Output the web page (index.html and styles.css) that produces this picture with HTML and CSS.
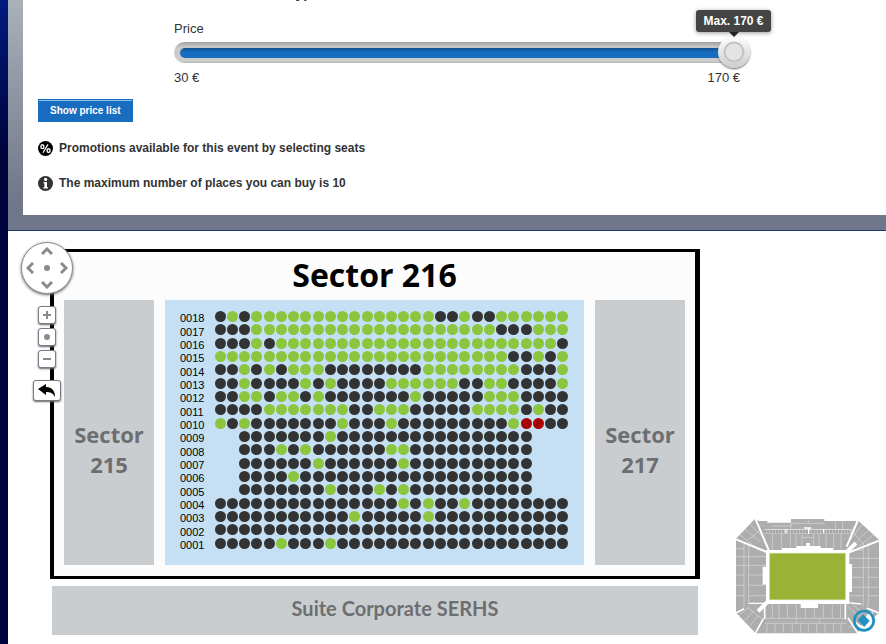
FILE: index.html
```html
<!DOCTYPE html>
<html lang="en">
<head>
  <meta charset="UTF-8" />
  <meta name="viewport" content="width=device-width, initial-scale=1.0"/>
  <title>Sector 216</title>
  <link rel="stylesheet" href="styles.css">
</head>
<body>

  <div class="page">
    <div class="frame">
      <div class="panel">
        <h3 class="cut-title">Type</h3>

        <div class="price">
          <label for="price">Price</label>
          <div class="slider">
            <input type="range" id="price" min="30" max="170" value="170">
            <output class="tip" for="price">Max. 170 €</output>
          </div>
          <div class="limits"><span>30 €</span><span>170 €</span></div>
        </div>

        <button class="btn" type="button">Show price list</button>

        <p class="note">
          <svg class="icon" viewBox="0 0 15 15" aria-hidden="true">
            <circle cx="7.5" cy="7.5" r="7.5" fill="#000"/>
            <g fill="none" stroke="#fff">
              <ellipse cx="4.4" cy="5.7" rx="1.5" ry="1.9" stroke-width="1.4"/>
              <ellipse cx="10.6" cy="9.6" rx="1.5" ry="1.9" stroke-width="1.4"/>
              <path d="M10 3.4 5 11.8" stroke-width="1.2"/>
            </g>
          </svg>
          Promotions available for this event by selecting seats
        </p>
        <p class="note">
          <svg class="icon" viewBox="0 0 15 15" aria-hidden="true">
            <circle cx="7.5" cy="7.5" r="7.5" fill="#333"/>
            <circle cx="7.6" cy="3.4" r="1.6" fill="#fff"/>
            <path d="M5.6 6H9v5.2h1v1.4H5.4v-1.4h1V7.4h-.8z" fill="#fff"/>
          </svg>
          The maximum number of places you can buy is 10
        </p>
      </div>
    </div>

    <div class="map">
      <div class="plan">
        <div class="stand">
          <h1>Sector 216</h1>
          <div class="sectors">
            <a class="sector" href="#215">Sector<br>215</a>
            <div class="seats" id="seats"></div>
            <a class="sector" href="#217">Sector<br>217</a>
          </div>
        </div>
        <a class="suite" href="#suite">Suite Corporate SERHS</a>
      </div>

      <svg class="stadium" viewBox="45 42 432 350" role="img" aria-label="Stadium">
        <path fill="#adadad" d="M48 104 104 45l14 6h24v5h71V45h100v6h97l5-1 62 57v219l-67 62H107l-59-62z"/>
        <!-- seat block divisions -->
        <g fill="none" stroke="#d9d9d9" stroke-width="2">
          <path d="M213 56v18M265 46v13M213 58h100M157 66h56M346 52v22M368 52v22"/>
          <path d="M157 90v48M184 90v46M211 90v40M228 90v38M246 90v36M281 90v36M297 90v38M318 90v40M341 90v44M363 90v46M246 100h35"/>
          <path d="M72 118v190M86 122v178M48 134h24M48 158h90M48 184h90M48 213h24M86 213h44M48 244h24M86 244h44M48 275h24M86 275h54"/>
          <path d="M430 118v190M445 114v194M390 138h40M390 163h87M390 191h87M396 220h34M396 250h81M390 275h40M445 275h32M445 220h32"/>
          <path d="M60 92l56 46M75 77l46 36M92 62l34 36M86 108l34-30M426 62l-34 46M445 78l-40 40M460 92l-44 36M392 76l38 44"/>
          <path d="M157 302v40M177 302v40M202 302v40M229 302v40M256 302v40M283 312v30M310 302v40M337 302v40M362 302v40"/>
          <path d="M132 343h244M134 358h246M229 344v14M298 344v14M141 360v28M165 360v28M190 360v28M217 360v28M242 360v28M265 360v28M290 360v28M315 360v28M340 360v28M363 360v28"/>
          <path d="M58 334l30-26M74 350l26-28M90 366l24-30M84 312l40 30M382 306l42 38M396 300l34 28M386 372l40-40"/>
        </g>
        <path d="M132 76h262v12H132z" fill="#fff"/>
        <path d="M132 82h262" stroke="#a5a5a5" stroke-width="10" stroke-dasharray="8 1"/>
        <path d="M198 76v12M266 72v18M311 76v12M252 72h22" stroke="#fff" stroke-width="4"/>
        <g fill="none" stroke="#fff">
          <path d="M106 44 146 138M414 48 380 128M48 106 140 144M477 110 386 146" stroke-width="6"/>
          <path d="M48 327 72 314M477 327 440 312M106 388 130 344M414 388 384 342M134 344V304M376 300V346" stroke-width="5"/>
          <path d="M114 322 144 292M382 142 408 117" stroke-width="12"/>
          <path d="M86 298h54M384 296l40 4" stroke-width="4"/>
        </g>
        <path d="M138 138h48v-6h43v-6h29v-9h12v9h32v6h38v6h48v42h8v84h-8v36h-94v12h-52v-12H138v-58h-10v-54h10z" fill="#fff"/>
        <path d="M149 148h227v139H149z" fill="#9ab235" stroke="#c3d28b" stroke-width="2"/>
        <path d="M400 358 458 322v44l-28 22z" fill="#fff"/>
        <path d="M404 350l20-24 22-4-22 44z" fill="#adadad"/>
        <path d="M413 349l16-18 20 19-16 19z" fill="#2290c3"/>
        <circle cx="432" cy="350" r="29" fill="none" stroke="#2290c3" stroke-width="8"/>
      </svg>

      <div class="controls">
        <div class="pad">
          <button class="up" type="button" aria-label="Up"><svg viewBox="0 0 12 8"><path d="M1 7 6 2l5 5"/></svg></button>
          <button class="left" type="button" aria-label="Left"><svg viewBox="0 0 8 12"><path d="M7 1 2 6l5 5"/></svg></button>
          <button class="center" type="button" aria-label="Center"></button>
          <button class="right" type="button" aria-label="Right"><svg viewBox="0 0 8 12"><path d="M1 1l5 5-5 5"/></svg></button>
          <button class="down" type="button" aria-label="Down"><svg viewBox="0 0 12 8"><path d="M1 1l5 5 5-5"/></svg></button>
        </div>
        <div class="zoom">
          <button type="button" aria-label="Zoom in"><svg viewBox="0 0 8 8"><path d="M4 0v8M0 4h8"/></svg></button>
          <button type="button" aria-label="Reset zoom"><svg viewBox="0 0 8 8"><circle cx="4" cy="4" r="2"/></svg></button>
          <button type="button" aria-label="Zoom out"><svg viewBox="0 0 8 8"><path d="M0 4h8"/></svg></button>
        </div>
        <button class="back" type="button" aria-label="Back">
          <svg viewBox="0 0 18 13"><path d="M0 5 8 0v3c6 0 9 4 9 10-2-4-5-5-9-5v3z"/></svg>
        </button>
      </div>
    </div>
  </div>

  <script src="seats.js"></script>
</body>
</html>
```

FILE: styles.css
```css
* {
  box-sizing: border-box;
}
body {
  margin: 0;
  padding-left: 8px;
  min-height: 100vh;
  font-family: "Liberation Sans", Arial, sans-serif;
  font-size: 13px;
  color: #333;
  background: #00043c linear-gradient(#001a80, #00043c 150px) no-repeat;
}
button {
  padding: 0;
  border: none;
  cursor: pointer;
}
.page {
  background: #fff;
  min-height: 100vh;
}
.frame {
  padding: 0 0 15px 15px;
  background: linear-gradient(#a9b1b9, #70778a 200px);
  border-bottom: 1px solid #1b3a78;
}
.panel {
  background: #fff;
  padding: 0 15px 24px;
}
.cut-title {
  display: flex;
  align-items: flex-end;
  height: 2px;
  margin: 0 0 19px 250px;
  overflow: hidden;
  font-size: 14px;
  line-height: 18px;
}

/* price slider */
.price {
  max-width: 702px;
  padding-left: 136px;
  line-height: 16px;
}
.price label {
  display: block;
}
.slider {
  position: relative;
  height: 21px;
  margin: 5px 0 7px;
  border-radius: 11px;
  background: linear-gradient(#a0a0a0, #c8c8c8 5px, #cdcdcd 19px, #b4b4b4);
}
.slider::before {
  content: "";
  position: absolute;
  top: 6px;
  left: 6px;
  right: 6px;
  height: 10px;
  border-radius: 5px;
  background: linear-gradient(#11508c, #186dc0 4px);
}
.slider input {
  position: absolute;
  top: -6px;
  left: 0;
  width: calc(100% + 10px);
  height: 32px;
  margin: 0;
  appearance: none;
  background: none;
}
.slider input::-webkit-slider-thumb {
  appearance: none;
  width: 32px;
  height: 32px;
  border-radius: 50%;
  background:
    radial-gradient(circle, #e5e2e2 8px, #b9b9b9 9px, #ccc 10px, transparent 11px),
    linear-gradient(#fff, #ccc);
  box-shadow: 0 1px 2px #666;
}
.tip {
  position: absolute;
  right: -31px;
  bottom: 31px;
  width: 75px;
  border-radius: 3px;
  background: #444;
  box-shadow: 0 1px 4px #999;
  color: #fff;
  font-size: 12px;
  font-weight: bold;
  line-height: 22px;
  text-align: center;
}
.tip::after {
  content: "";
  position: absolute;
  top: 100%;
  left: 33px;
  border: 5px solid transparent;
  border-top-color: #222;
}
.limits {
  display: flex;
  justify-content: space-between;
}

.btn {
  display: block;
  height: 23px;
  margin: 13px 0 18px;
  padding: 0 11px;
  border: 1px solid #186dc0;
  box-shadow: inset 0 1px #8fc0ee;
  background: #186dc0;
  color: #fff;
  font-family: inherit;
  font-size: 10px;
  font-weight: bold;
}
.note {
  display: flex;
  align-items: center;
  gap: 6px;
  margin: 0 0 19px;
  font-size: 12px;
  font-weight: bold;
  line-height: 16px;
}
.note:last-child {
  margin-bottom: 0;
}
.icon {
  width: 15px;
  height: 15px;
}

/* seat map */
.map {
  position: relative;
  display: flex;
  align-items: flex-end;
  gap: 35px;
  padding: 18px 7px 8px 42px;
}
.plan {
  flex: 1;
}
.stand {
  border: 3px solid #000;
  border-width: 3px 5px 3px 4px;
  background: #fcfcfc;
}
.stand h1 {
  margin: 0;
  padding-bottom: 2px;
  color: #000;
  font-family: "Open Sans", "Noto Sans", sans-serif;
  font-size: 32px;
  font-weight: bold;
  line-height: 46px;
  text-align: center;
}
.sectors {
  display: grid;
  grid-template-columns: 90px 1fr 90px;
  gap: 11px;
  padding: 0 10px 11px;
}
.sector,
.suite {
  background: #cacdd0;
  color: #6d6e70;
  font-family: "Open Sans", "Noto Sans", sans-serif;
  font-weight: bold;
  text-align: center;
  text-decoration: none;
}
.sector {
  padding-top: 119px;
  font-size: 22px;
  line-height: 30px;
}
.suite {
  display: block;
  margin: 7px 2px 0;
  padding: 0 0 5px 40px;
  font-family: Lato, sans-serif;
  font-size: 20px;
  line-height: 44px;
}
.seats {
  display: flex;
  flex-direction: column;
  height: 265px;
  padding: 10px 15px 15px;
  background: #c5e0f5;
}
.row {
  flex: 1;
  display: grid;
  grid-template-columns: 34px repeat(29, 1fr);
  place-items: center;
}
.num {
  justify-self: start;
  align-self: end;
  color: #000;
  font-size: 11px;
  line-height: 10px;
}
.seat {
  width: 11px;
  height: 11px;
  border-radius: 50%;
  background: #333;
}
.free {
  background: #8cc63f;
}
.picked {
  background: #a80000;
}
.stadium {
  width: 144px;
}

/* map navigation */
.controls {
  position: absolute;
  top: 11px;
  left: 13px;
  display: flex;
  flex-direction: column;
  align-items: center;
  gap: 12px;
}
.controls svg {
  display: block;
}
.pad {
  display: grid;
  grid-template: repeat(3, 1fr) / repeat(3, 1fr);
  place-items: center;
  width: 52px;
  height: 52px;
  border: 1px solid #8b8e99;
  border-radius: 50%;
  background: #fff;
  box-shadow: 0 1px 3px #666;
}
.pad button {
  background: none;
}
.pad path {
  fill: none;
  stroke: #8a8a8a;
  stroke-width: 3;
}
.up { grid-area: 1 / 2; }
.left { grid-area: 2 / 1; }
.right { grid-area: 2 / 3; }
.down { grid-area: 3 / 2; }
.up svg,
.down svg {
  width: 12px;
  height: 8px;
}
.left svg,
.right svg {
  width: 8px;
  height: 12px;
}
.pad .center {
  grid-area: 2 / 2;
  width: 6px;
  height: 6px;
  border-radius: 50%;
  background: #8a8a8a;
}
.zoom {
  display: grid;
  gap: 4px;
}
.zoom button,
.back {
  display: grid;
  place-items: center;
  border: 1px solid #777c88;
  border-radius: 3px;
  background: #fff;
  box-shadow: 0 1px 2px #666;
}
.zoom button {
  width: 18px;
  height: 18px;
}
.zoom svg {
  width: 8px;
  height: 8px;
  fill: #8a8a8a;
  stroke: #8a8a8a;
  stroke-width: 2;
}
.back {
  width: 28px;
  height: 21px;
}
.back svg {
  width: 18px;
  height: 13px;
}
```

FILE: seats.js
```js
// k = taken, g = free, r = picked, . = no seat
const rows = [
  ["0018", "kgkgggggggggggggggkkgkkgggggg"],
  ["0017", "kkkggggggggggggggggggggkkkggg"],
  ["0016", "kkkgkgggggggggggggggggggggggk"],
  ["0015", "ggggggggggggggggggggggggkkgkg"],
  ["0014", "kkgkgkgggkkkkkkkkggggggggkkkg"],
  ["0013", "kkgkkkkgkgkkkkggggggkkggkkkkg"],
  ["0012", "kkggkggkgkkkkkkkgkkkkkgggkkkk"],
  ["0011", "kkkkgggggggkkgggkkkkkggggkgkk"],
  ["0010", "gkgkkkkkkkgkkkgkkkkkkkkkgrrkk"],
  ["0009", "..kkkkkkkgkkkkkkkkkkkkkkkk..."],
  ["0008", "..kkkgkgkkkkkkggkkkkkkkkkk..."],
  ["0007", "..kkkkkkgkkkkkkgkkkkkkkkkk..."],
  ["0006", "..kkkkgkkkkkkkkkkkkkkkkkkk..."],
  ["0005", "..kkkkkkkgkkkgkgkkkkkkkkkk..."],
  ["0004", "kkkkkkkkkkkkkkkgkgkkgkkkkkkkk"],
  ["0003", "kkkkkkkkkkkgkkkkkgkkkkkkkkkkk"],
  ["0002", "kkkkkkkkkkkkkkkkkkkkkkkkkkkkk"],
  ["0001", "kkkkkgkkkgkkkkkkkkkkkkkkkkkkk"]
];
const states = { k: "seat", g: "seat free", r: "seat picked" };

const seats = document.getElementById("seats");
rows.forEach(([num, line]) => {
  const row = document.createElement("div");
  row.className = "row";
  const label = document.createElement("span");
  label.className = "num";
  label.innerText = num;
  row.appendChild(label);

  [...line].forEach((s, i) => {
    if (s === ".") {
      row.appendChild(document.createElement("span"));
      return;
    }
    const seat = document.createElement("button");
    seat.type = "button";
    seat.className = states[s];
    seat.disabled = s === "k";
    seat.setAttribute("aria-label", "Row " + num + " seat " + (i + 1));
    seat.onclick = () => {
      seat.classList.toggle("free");
      seat.classList.toggle("picked");
    };
    row.appendChild(seat);
  });
  seats.appendChild(row);
});
```
